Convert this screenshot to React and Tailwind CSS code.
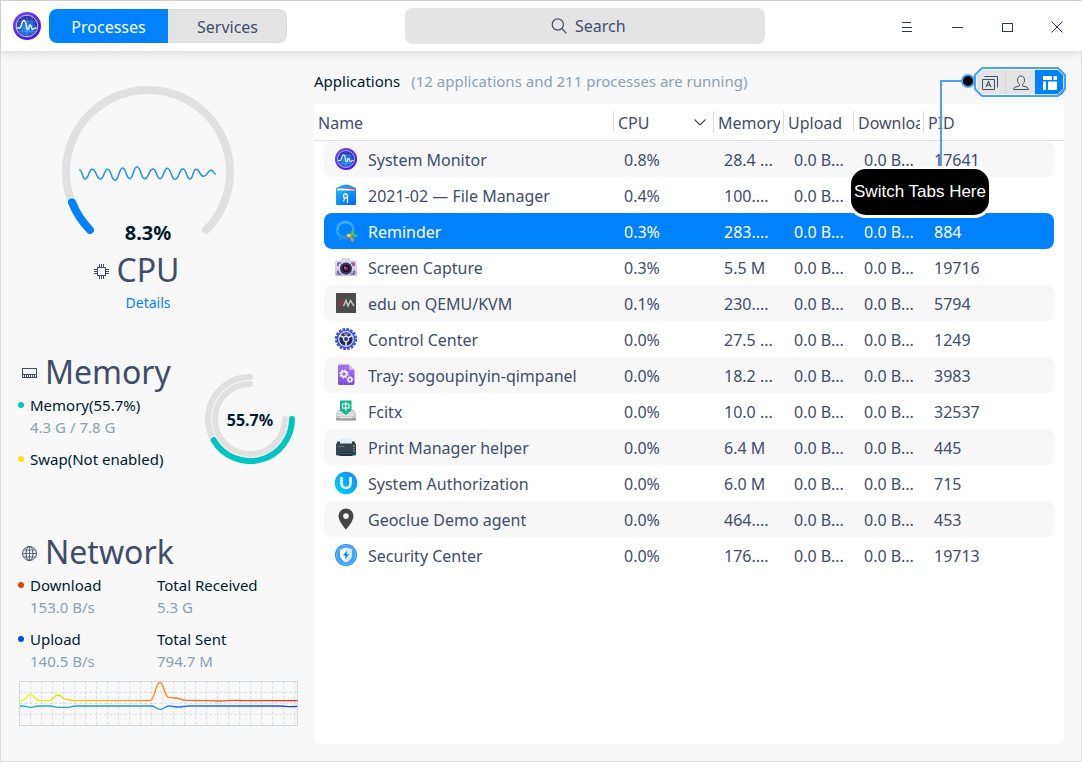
import React from "react";

/* Joins points with horizontal-tangent curves */
function smooth(points) {
  return points
    .map(([x, y], i) => {
      if (i === 0) return `M${x} ${y}`;
      const [px, py] = points[i - 1];
      const mid = (px + x) / 2;
      return `C${mid} ${py} ${mid} ${y} ${x} ${y}`;
    })
    .join(" ");
}

const cpuWave = [
  [119, 300], [135, 327], [157, 298], [181, 327], [203, 298], [225, 331], [248, 294],
  [269, 326], [291, 290], [314, 326], [339, 297], [360, 326], [382, 295], [405, 328],
  [429, 297], [450, 327], [468, 298], [491, 319], [514, 300], [526, 312],
];

const downloadLine = [
  [60, 512], [68, 511], [90, 493], [117, 512], [148, 512], [174, 495], [197, 508], [226, 512],
  [450, 512], [480, 458], [506, 502], [524, 504], [560, 511], [620, 512], [660, 513], [703, 511],
  [740, 512], [892, 512],
];

const uploadLine = [
  [60, 528], [66, 528], [92, 532], [117, 528], [150, 528], [174, 532], [205, 532], [226, 528],
  [455, 528], [481, 538], [506, 528], [535, 531], [565, 528], [845, 528], [870, 530], [892, 529],
];

function MonitorIcon({ className, id }) {
  return (
    <svg viewBox="0 0 28 28" className={className} aria-hidden="true">
      <defs>
        <linearGradient id={`${id}-ring`} x1="0" y1="0" x2="1" y2="1">
          <stop offset="0" stopColor="#7a4df5" />
          <stop offset="1" stopColor="#3f0fd0" />
        </linearGradient>
        <radialGradient id={`${id}-face`} cx="0.5" cy="0.62" r="0.6">
          <stop offset="0" stopColor="#1fa6ff" />
          <stop offset="1" stopColor="#2c1f9e" />
        </radialGradient>
      </defs>
      <circle cx="14" cy="14" r="14" fill={`url(#${id}-ring)`} />
      <circle cx="14" cy="14" r="10.8" fill={`url(#${id}-face)`} stroke="#d3c4ff" strokeWidth="1" />
      <path d="M9 5v18M14 3.5v21M19 5v18M4 9.5h20M4 19.5h20" stroke="#69b9ff" strokeWidth="0.5" opacity="0.7" />
      <path
        d="M4.500 16H6.500C8.500 16 8.500 8.500 11 8.500S13 17.500 14.800 17.500 15.500 13 17 13 18.500 17.500 19.800 17.500 20.500 16 23 16"
        fill="none"
        stroke="#fff"
        strokeWidth="1.300"
        strokeLinecap="round"
      />
    </svg>
  );
}

const iconClass = "size-6 shrink-0";

function AppIcon({ name }) {
  switch (name) {
    case "monitor":
      return (
        <span className="flex size-6 shrink-0 items-center justify-center">
          <MonitorIcon id="row-monitor" className="size-[22px]" />
        </span>
      );
    case "files":
      return (
        <svg viewBox="0 0 24 24" className={iconClass} aria-hidden="true">
          <defs>
            <linearGradient id="files-g" x1="0" y1="0" x2="1" y2="1">
              <stop offset="0" stopColor="#1db4ff" />
              <stop offset="1" stopColor="#0a63f7" />
            </linearGradient>
          </defs>
          <path d="M2 5L9 2q3-1.200 6 0l7 3V9H2z" fill="#1a9df2" />
          <path d="M3 5.500h18v3H3z" fill="#fff" />
          <path d="M9 5l12 0v2z" fill="#f0466e" />
          <path d="M2 7.500h20V21q0 1-1 1H3q-1 0-1-1z" fill="url(#files-g)" />
          <circle cx="11.500" cy="13" r="2" fill="none" stroke="#fff" strokeWidth="1.300" />
          <path d="M10.500 15.500l-1 3M13.500 14.500v5.500" stroke="#fff" strokeWidth="1.100" />
        </svg>
      );
    case "reminder":
      return (
        <svg viewBox="0 0 24 24" className={iconClass} aria-hidden="true">
          <path
            d="M6.500 17.500A8.200 8.200 0 1 1 19.300 12"
            fill="none"
            stroke="#2aa3f0"
            strokeWidth="2.600"
          />
          <path d="M6.500 15.500L3.800 20.500h9.700l1-2.500z" fill="#2a8fe0" />
          <path d="M3.800 11a7.800 7.800 0 0 1 13.500-5" fill="none" stroke="#5cc5f5" strokeWidth="1" />
          <path d="M18.500 10.500q3 2.500 1 6.500h-3q-.5-4 2-6.500z" fill="#5cb848" />
          <path d="M12.500 15.500q3-1.500 4.500.5l-.5 2.500q-3.500.3-4-3z" fill="#f5d23c" />
          <path d="M17.500 17.500l2.500 2.500-1 3-3-2z" fill="#f28a2c" />
          <path d="M19.500 15.500q3-1 4.500 1.500-2 2-4.500 1z" fill="#35b7a9" />
        </svg>
      );
    case "capture":
      return (
        <svg viewBox="0 0 24 24" className={iconClass} aria-hidden="true">
          <path d="M7 5.500L8.500 3h7L17 5.500h4q2 0 2 2V19q0 2-2 2H3q-2 0-2-2V7.500q0-2 2-2z" fill="#d6d1f8" />
          <path d="M1 16h22v3q0 2-2 2H3q-2 0-2-2z" fill="#beb8ec" />
          <path d="M4 11V8h3M17 8h3v3M20 15.500V19h-3M7 19H4v-3.500" fill="none" stroke="#4b465f" strokeWidth="1.200" />
          <circle cx="12" cy="13.500" r="6" fill="#37314a" />
          <circle cx="12" cy="13.500" r="3.600" fill="#160d26" />
          <circle cx="12" cy="13.500" r="2.100" fill="#8c2b6e" />
          <circle cx="11" cy="12.500" r="1" fill="#c76ab0" />
          <circle cx="19" cy="10" r="1" fill="#e8402f" />
        </svg>
      );
    case "vm":
      return (
        <svg viewBox="0 0 24 24" className={iconClass} aria-hidden="true">
          <rect x="2" y="2" width="20" height="20" rx="0.500" fill="#4c4c4c" />
          <path d="M4.500 9l2 5.500L9 9" fill="none" stroke="#8c3847" strokeWidth="1.700" />
          <path d="M9.500 15l2.500-5.500 2 5.500 2.500-5.500 3.500 5.500" fill="none" stroke="#c4c4c4" strokeWidth="1.500" />
        </svg>
      );
    case "control":
      return (
        <svg viewBox="0 0 24 24" className={iconClass} aria-hidden="true">
          <circle cx="12" cy="12" r="10" fill="none" stroke="#3c4fd8" strokeWidth="2.200" strokeDasharray="2.700 1.230" />
          <circle cx="12" cy="12" r="9.300" fill="#3552d9" />
          <circle cx="12" cy="12" r="7.300" fill="#252b52" stroke="#dce4ff" strokeWidth="1.200" />
          <path d="M12 12V19M12 12L6 8.500M12 12l6-3.500" stroke="#dce4ff" strokeWidth="1.600" />
          <path d="M9 6.500h6L12 10z" fill="#8796dd" />
          <circle cx="12" cy="12" r="2.600" fill="#303c87" stroke="#dce4ff" strokeWidth="1.100" />
        </svg>
      );
    case "tray":
      return (
        <svg viewBox="0 0 24 24" className={iconClass} aria-hidden="true">
          <defs>
            <linearGradient id="tray-g" x1="0" y1="0" x2="0" y2="1">
              <stop offset="0" stopColor="#a578f2" />
              <stop offset="1" stopColor="#7c4ee0" />
            </linearGradient>
          </defs>
          <path d="M5.500 1.500H15l5.500 5.500v13.500q0 1.500-1.500 1.500H5.500Q4 22 4 20.500V3q0-1.500 1.500-1.500z" fill="url(#tray-g)" />
          <path d="M15 1.500V5.500Q15 7 16.500 7h4z" fill="#d1b8fb" />
          <circle cx="10" cy="11" r="2.600" fill="none" stroke="#fff" strokeWidth="1.600" />
          <circle cx="10" cy="11" r="4" fill="none" stroke="#fff" strokeWidth="1.200" strokeDasharray="1.600 1.540" />
          <circle cx="16" cy="16.500" r="1.900" fill="none" stroke="#fff" strokeWidth="1.400" />
          <circle cx="16" cy="16.500" r="2.900" fill="none" stroke="#fff" strokeWidth="0.900" strokeDasharray="1.200 1.077" />
        </svg>
      );
    case "fcitx":
      return (
        <svg viewBox="0 0 24 24" className={iconClass} aria-hidden="true">
          <path d="M4 11h16l2 4v5.500q0 1-1 1H3q-1 0-1-1V15z" fill="#c9c9c9" />
          <path d="M2 19h20v1.500q0 1-1 1H3q-1 0-1-1z" fill="#9f9f9f" />
          <path d="M4 13.500h16M3.500 16h17M6 18.500h12" stroke="#f7f7f7" strokeWidth="1.300" strokeDasharray="2 .7" />
          <path d="M6 1.500h11.500V11.500L11.800 16 6 11.500z" fill="#10b98d" />
          <path d="M8.500 5h6.500v4H8.500zM11.750 3v9" fill="none" stroke="#fff" strokeWidth="1.100" />
        </svg>
      );
    case "printer":
      return (
        <svg viewBox="0 0 24 24" className={iconClass} aria-hidden="true">
          <path d="M6 3.500h11.500L19 9H5z" fill="#dbeefc" />
          <path d="M3.500 6.500H6v2.500h12V6.500h2.500l1.500 4H2z" fill="#26323a" />
          <rect x="2" y="8.500" width="20" height="12" rx="1.200" fill="#344651" />
          <path d="M5.500 15h13v6h-13z" fill="#263640" />
          <path d="M6 16h12M6 18.500h12" stroke="#40545f" strokeWidth="1" />
          <path d="M3.500 11.500h7" stroke="#7b8c95" strokeWidth="0.700" />
          <path d="M19 11h1.800" stroke="#f0c43c" strokeWidth="1.100" />
          <path d="M19 13.500h1.800" stroke="#ef5b3a" strokeWidth="1.100" />
          <path d="M19 16h1.800" stroke="#3cb0ef" strokeWidth="1.100" />
        </svg>
      );
    case "authorization":
      return (
        <svg viewBox="0 0 24 24" className={iconClass} aria-hidden="true">
          <defs>
            <linearGradient id="auth-g" x1="0" y1="1" x2="1" y2="0">
              <stop offset="0" stopColor="#00d5f5" />
              <stop offset="0.500" stopColor="#05b0fa" />
              <stop offset="1" stopColor="#1687ff" />
            </linearGradient>
          </defs>
          <circle cx="12" cy="12" r="11.300" fill="url(#auth-g)" />
          <path d="M7.500 6v6.500a4.500 4.500 0 0 0 9 0V6" fill="none" stroke="#fff" strokeWidth="2.500" />
        </svg>
      );
    case "geoclue":
      return (
        <svg viewBox="0 0 24 24" className={iconClass} aria-hidden="true">
          <path
            fillRule="evenodd"
            d="M12 1.500a7.500 7.500 0 0 1 7.500 7.500C19.500 14.500 12 22.500 12 22.500S4.500 14.500 4.500 9A7.500 7.500 0 0 1 12 1.500zm0 4.800a2.800 2.800 0 1 0 0 5.600 2.800 2.800 0 0 0 0-5.600z"
            fill="#454545"
          />
        </svg>
      );
    default:
      return (
        <svg viewBox="0 0 24 24" className={iconClass} aria-hidden="true">
          <circle cx="12" cy="12" r="11" fill="#1f8df5" />
          <circle cx="12" cy="12" r="9.600" fill="#3aa5fa" stroke="#7cc6ff" strokeWidth="0.800" />
          <path d="M12 4.500l6 2v5q0 5-6 8-6-3-6-8v-5z" fill="#f4faff" />
          <path d="M12 4.500l6 2v5q0 5-6 8z" fill="#d5e9fb" />
          <path d="M13 7.500l-4 5h2.500L11 16.500l4-5.300h-2.500z" fill="#1479ee" />
        </svg>
      );
  }
}

const processes = [
  { icon: "monitor", name: "System Monitor", cpu: "0.8%", memory: "28.4 ...", pid: "17641" },
  { icon: "files", name: "2021-02 — File Manager", cpu: "0.4%", memory: "100....", pid: "" },
  { icon: "reminder", name: "Reminder", cpu: "0.3%", memory: "283....", pid: "884", selected: true },
  { icon: "capture", name: "Screen Capture", cpu: "0.3%", memory: "5.5 M", pid: "19716" },
  { icon: "vm", name: "edu on QEMU/KVM", cpu: "0.1%", memory: "230....", pid: "5794" },
  { icon: "control", name: "Control Center", cpu: "0.0%", memory: "27.5 ...", pid: "1249" },
  { icon: "tray", name: "Tray: sogoupinyin-qimpanel", cpu: "0.0%", memory: "18.2 ...", pid: "3983" },
  { icon: "fcitx", name: "Fcitx", cpu: "0.0%", memory: "10.0 ...", pid: "32537" },
  { icon: "printer", name: "Print Manager helper", cpu: "0.0%", memory: "6.4 M", pid: "445" },
  { icon: "authorization", name: "System Authorization", cpu: "0.0%", memory: "6.0 M", pid: "715" },
  { icon: "geoclue", name: "Geoclue Demo agent", cpu: "0.0%", memory: "464....", pid: "453" },
  { icon: "security", name: "Security Center", cpu: "0.0%", memory: "176....", pid: "19713" },
];

function TitleBar() {
  const control = "flex h-[50px] w-[50px] items-center justify-center pt-[2px]";
  return (
    <header className="relative z-10 -mr-px flex h-[50px] shrink-0 items-center bg-white pl-3 shadow-[0_1px_10px_rgba(0,0,0,0.16)]">
      <MonitorIcon id="title-monitor" className="size-7" />
      <nav className="ml-2 flex h-[34px] overflow-hidden rounded-lg text-base">
        <button type="button" className="w-[119px] bg-[#0081ff] pt-[2px] text-white">Processes</button>
        <button type="button" className="w-[119px] rounded-r-lg border border-[#dadada] border-l-[#e4e4e4] bg-[#e4e4e4] pt-[2px]">Services</button>
      </nav>
      <div className="flex flex-1 justify-center pl-px">
        <label className="flex h-9 w-[360px] items-center justify-center gap-2 rounded-lg bg-[#e4e4e4] pl-2">
          <svg viewBox="0 0 16 16" className="size-4" fill="none" stroke="#414d68" strokeWidth="1.200" aria-hidden="true">
            <circle cx="6.800" cy="6.500" r="5.600" />
            <path d="M10.900 10.500L15.300 15.300" />
          </svg>
          <input
            type="text"
            aria-label="Search"
            placeholder="Search"
            className="w-[52px] bg-transparent text-base outline-none placeholder:text-[#414d68]"
          />
        </label>
      </div>
      <button type="button" aria-label="Menu" className={control}>
        <svg viewBox="0 0 12 12" className="size-3" stroke="#2b3654" shapeRendering="crispEdges" aria-hidden="true">
          <path d="M1 1.500h9M1 6.500h10M1 10.500h10" />
        </svg>
      </button>
      <button type="button" aria-label="Minimize" className={control}>
        <svg viewBox="0 0 12 12" className="size-3" stroke="#2b3654" shapeRendering="crispEdges" aria-hidden="true">
          <path d="M1 6.500h11" />
        </svg>
      </button>
      <button type="button" aria-label="Maximize" className={control}>
        <svg viewBox="0 0 12 12" className="size-3" fill="none" stroke="#2b3654" shapeRendering="crispEdges" aria-hidden="true">
          <path d="M1.500 2.500h10v8h-10z" />
        </svg>
      </button>
      <button type="button" aria-label="Close" className={control}>
        <svg viewBox="0 0 12 12" className="size-3" stroke="#2b3654" aria-hidden="true">
          <path d="M0.500 0.500l11 11M11.500 0.500l-11 11" />
        </svg>
      </button>
    </header>
  );
}

function CpuSection() {
  return (
    <section className="flex flex-col items-center pr-5">
      <div className="grid h-[159px] w-[172px]">
        <svg viewBox="66 48 516 450" className="col-start-1 row-start-1 h-[150px] w-[172px]" fill="none" strokeLinecap="round" aria-hidden="true">
          <path d="M150 480A246 246 0 1 1 498 480" stroke="#e0e0e0" strokeWidth="24" />
          <path d="M150 480A246 246 0 0 1 96 397" stroke="#f8f8f8" strokeWidth="30" />
          <path d="M150 480A246 246 0 0 1 96 397" stroke="#0081ff" strokeWidth="24" />
          <path d={smooth(cpuWave)} stroke="#1f8dfa" strokeWidth="4.500" />
        </svg>
        <strong className="col-start-1 row-start-1 self-end justify-self-center text-xl leading-6 text-[#001a2e]">8.3%</strong>
      </div>
      <h2 className="mt-[5px] grid w-full grid-cols-[1fr_auto_1fr] items-center text-[32px] leading-10">
        <svg viewBox="0 0 15 15" className="mr-2 mt-[3px] size-[15px] justify-self-end" fill="none" stroke="#414d68" shapeRendering="crispEdges" aria-hidden="true">
          <path d="M3.500 3.500h8v8h-8zM5.500 0v3M7.500 0v3M9.500 0v3M5.500 12v3M7.500 12v3M9.500 12v3M0 5.500h3M0 7.500h3M0 9.500h3M12 5.500h3M12 7.500h3M12 9.500h3" />
        </svg>
        <span>CPU</span>
      </h2>
      <a href="#details" className="mt-[3px] text-sm leading-5 text-[#0081ff]">Details</a>
    </section>
  );
}

function Dot({ className }) {
  return <span className={`size-[6px] shrink-0 rounded-full ${className}`} />;
}

function MemorySection() {
  return (
    <section className="mt-[39px] flex items-start justify-between pr-[3px]">
      <div>
        <h2 className="flex items-center gap-2 pl-1 text-[32px] leading-10">
          <svg viewBox="0 0 15 12" className="mt-[2px] h-3 w-[15px]" fill="none" stroke="#414d68" shapeRendering="crispEdges" aria-hidden="true">
            <path d="M0.500 8V1.500h14V8M0 7.500h15M0.500 8v3M2.500 8v3M4.500 8v3M6.500 8v3M8.500 8v3M10.500 8v3M12.500 8v3M14.500 8v3M0 10.500h15" />
          </svg>
          <span>Memory</span>
        </h2>
        <div className="mt-[2px] text-[15px] leading-[22px]">
          <p className="flex items-center gap-[6px] whitespace-nowrap text-[#001a2e]"><Dot className="bg-[#00c5c0]" />Memory(55.7%)</p>
          <p className="pl-3 text-[#8aa1b4]">4.3 G / 7.8 G</p>
          <p className="mt-[10px] flex items-center gap-[6px] whitespace-nowrap text-[#001a2e]"><Dot className="bg-[#ffdf1b]" />Swap(Not enabled)</p>
        </div>
      </div>
      <div className="mt-[22px] grid size-[90px] place-items-center">
        <svg viewBox="0 0 90 90" className="col-start-1 row-start-1 size-[90px]" fill="none" strokeWidth="6" strokeLinecap="round" aria-hidden="true">
          <path d="M45 3A42 42 0 1 0 87 45" stroke="#e0e0e0" />
          <path d="M45 10A35 35 0 1 0 80 45" stroke="#e0e0e0" />
          <path d="M87 45A42 42 0 0 1 8.600 66" stroke="#f8f8f8" strokeWidth="8" />
          <path d="M87 45A42 42 0 0 1 8.600 66" stroke="#00c5c0" />
        </svg>
        <strong className="col-start-1 row-start-1 pt-[2px] text-base leading-6 text-[#001a2e]">55.7%</strong>
      </div>
    </section>
  );
}

const gridX = Array.from({ length: 25 }, (_, k) => 92 + 33 * k);
const gridY = [487, 520, 553];

function NetworkSection() {
  return (
    <section className="mt-[62px]">
      <h2 className="flex items-center gap-2 pl-1 text-[32px] leading-10">
        <svg viewBox="0 0 15 15" className="mt-[3px] size-[15px]" fill="none" stroke="#414d68" aria-hidden="true">
          <circle cx="7.500" cy="7.500" r="7" />
          <ellipse cx="7.500" cy="7.500" rx="3.500" ry="7" />
          <path d="M7.500 0.500v14M0.500 7.500h14M1.800 4h11.400M1.800 11h11.400" strokeWidth="0.800" />
        </svg>
        <span>Network</span>
      </h2>
      <dl className="mt-[2px] grid grid-cols-[139px_1fr] gap-y-[10px] text-[15px] leading-[22px] text-[#001a2e]">
        <div>
          <dt className="flex items-center gap-[6px]"><Dot className="bg-[#e14300]" />Download</dt>
          <dd className="pl-3 text-[#8aa1b4]">153.0 B/s</dd>
        </div>
        <div>
          <dt>Total Received</dt>
          <dd className="text-[#8aa1b4]">5.3 G</dd>
        </div>
        <div>
          <dt className="flex items-center gap-[6px]"><Dot className="bg-[#004ef0]" />Upload</dt>
          <dd className="pl-3 text-[#8aa1b4]">140.5 B/s</dd>
        </div>
        <div>
          <dt>Total Sent</dt>
          <dd className="text-[#8aa1b4]">794.7 M</dd>
        </div>
      </dl>
      <svg viewBox="57 453 837 135" className="ml-px mt-[9px] block h-[45px] w-[279px]" fill="none" aria-hidden="true">
        <defs>
          <linearGradient id="down-g" gradientUnits="userSpaceOnUse" x1="60" y1="0" x2="892" y2="0">
            <stop offset="0" stopColor="#e6ff00" />
            <stop offset="0.500" stopColor="#f08a1c" />
            <stop offset="0.750" stopColor="#f0512a" />
            <stop offset="1" stopColor="#ff1c1c" />
          </linearGradient>
          <linearGradient id="up-g" gradientUnits="userSpaceOnUse" x1="60" y1="0" x2="892" y2="0">
            <stop offset="0" stopColor="#14b0d8" />
            <stop offset="0.500" stopColor="#2a86ec" />
            <stop offset="1" stopColor="#1742ff" />
          </linearGradient>
        </defs>
        {gridX.map((x) => (
          <path key={x} d={`M${x} 454V587`} stroke="#d4dbe0" strokeWidth="3" strokeDasharray="9 6" />
        ))}
        {gridY.map((y) => (
          <path key={y} d={`M58 ${y}H893`} stroke="#d4dbe0" strokeWidth="3" strokeDasharray="9 6" />
        ))}
        <rect x="58.500" y="454.500" width="834" height="132" stroke="#d0d7dd" strokeWidth="3" />
        <path d={smooth(downloadLine)} stroke="url(#down-g)" strokeWidth="4" />
        <path d={smooth(uploadLine)} stroke="url(#up-g)" strokeWidth="4" />
      </svg>
    </section>
  );
}

function ViewSwitch() {
  const item = "flex w-[30px] items-center justify-center";
  return (
    <div className="relative -mr-px">
      <div className="flex h-[26px] overflow-hidden rounded-lg bg-[#e4e4e4]">
        <button type="button" aria-label="Applications" className={item}>
          <svg viewBox="0 0 16 14" className="h-[14px] w-4" fill="none" stroke="#414d68" aria-hidden="true">
            <path d="M0.500 3.500h12v10h-12zM2.500 0.500h13v11" />
            <path d="M4 11l2.500-5.500L9 11M5 9.300h3" strokeWidth="1.100" />
          </svg>
        </button>
        <button type="button" aria-label="My processes" className={`${item} border-l border-[#d6d6d6]`}>
          <svg viewBox="0 0 16 16" className="size-4" fill="none" stroke="#414d68" aria-hidden="true">
            <path d="M8 1C5.500 1 4.500 2.800 4.500 5c0 2 .8 3.300 2 4.500v1.300L1.800 12.300Q0.800 12.800 0.600 14.500h14.800Q15.200 12.800 14.200 12.300L9.500 10.800V9.500c1.200-1.200 2-2.500 2-4.500C11.500 2.800 10.500 1 8 1z" />
          </svg>
        </button>
        <button type="button" aria-label="All processes" className={`${item} bg-[#0081ff]`}>
          <svg viewBox="0 0 14 14" className="size-[14px]" fill="#fff" aria-hidden="true">
            <path d="M0 0h9v4H0zM10.500 0H14v4h-3.500zM0 5.500h3V14H0zM5 5.500h9V14H5z" />
          </svg>
        </button>
      </div>
      {/* Callout pointing at the switch */}
      <svg viewBox="0 0 130 102" className="pointer-events-none absolute -right-[2px] -top-[3px] h-[102px] w-[130px] max-w-none" fill="none" aria-hidden="true">
        <path d="M45.500 2.500H120.500L126.500 8.500V21.500L120.500 27.500H45.500L39.500 21.500V8.500z" stroke="#fff" strokeOpacity="0.800" />
        <path d="M45 1H121L128 8V22L121 29H45L38 22V8z" stroke="#4aa1f5" strokeWidth="2" />
        <path d="M30 14H4V100" stroke="#4aa1f5" strokeWidth="2" />
        <circle cx="31" cy="14" r="6" fill="#000" stroke="#4aa1f5" strokeWidth="2" />
      </svg>
      <div className="absolute right-[73px] top-[96px] z-20 flex h-[52px] w-[144px] items-center justify-center whitespace-nowrap rounded-[18px] border-[3px] border-white bg-black font-['Liberation_Sans',sans-serif] text-[17px] text-white">
        Switch Tabs Here
      </div>
    </div>
  );
}

function HeadCell({ children, divider = true, ...rest }) {
  return (
    <th scope="col" className="h-[37px] border-b border-[#e0e0e0] p-0 text-left font-normal" {...rest}>
      <div className={`flex h-[22px] items-center pl-1 pr-[3px] pt-[2px] ${divider ? "border-l border-[#dcdcdc]" : ""}`}>
        {children}
      </div>
    </th>
  );
}

function ProcessTable() {
  return (
    <table className="w-full table-fixed border-separate border-spacing-0 whitespace-nowrap text-base leading-[22px]">
      <colgroup>
        <col className="w-[10px]" />
        <col />
        <col className="w-[100px]" />
        <col className="w-[70px]" />
        <col className="w-[70px]" />
        <col className="w-[70px]" />
        <col className="w-[131px]" />
        <col className="w-[10px]" />
      </colgroup>
      <thead>
        <tr>
          <HeadCell colSpan={2} divider={false}>Name</HeadCell>
          <HeadCell>
            <span className="flex-1">CPU</span>
            <svg viewBox="0 0 12 8" className="mr-1 h-2 w-3" fill="none" stroke="#414d68" strokeWidth="1.200" aria-hidden="true">
              <path d="M0.500 0.500L6 6L11.500 0.500" />
            </svg>
          </HeadCell>
          <HeadCell><span className="overflow-hidden">Memory</span></HeadCell>
          <HeadCell><span className="overflow-hidden">Upload</span></HeadCell>
          <HeadCell><span className="overflow-hidden">Download</span></HeadCell>
          <HeadCell colSpan={2}>PID</HeadCell>
        </tr>
      </thead>
      <tbody>
        {processes.map((p, i) => {
          const tone = p.selected ? "bg-[#0081ff] text-white" : i % 2 === 0 ? "bg-[#f7f7f7]" : "bg-white";
          const cell = `h-9 p-0 pl-[11px] pt-[2px] ${tone}`;
          return (
            <tr key={p.name}>
              <td className="p-0" />
              <td className={`h-9 rounded-l-lg p-0 pl-[10px] ${tone}`}>
                <div className="flex items-center gap-[10px]">
                  <AppIcon name={p.icon} />
                  <span className="pt-[2px]">{p.name}</span>
                </div>
              </td>
              <td className={cell}>{p.cpu}</td>
              <td className={cell}>{p.memory}</td>
              <td className={cell}>0.0 B...</td>
              <td className={cell}>{p.pid ? "0.0 B..." : ""}</td>
              <td className={`${cell} rounded-r-lg`}>{p.pid}</td>
              <td className="p-0" />
            </tr>
          );
        })}
      </tbody>
    </table>
  );
}

export default function App() {
  return (
    <div className="flex min-h-screen flex-col border border-[#dcdcdc] bg-[#f8f8f8] font-['Noto_Sans',sans-serif] text-[#414d68]">
      <TitleBar />
      <div className="flex flex-1">
        <aside className="w-[313px] shrink-0 pl-[17px] pr-4 pt-[35px]">
          <CpuSection />
          <MemorySection />
          <NetworkSection />
        </aside>
        <main className="flex min-w-0 flex-1 flex-col pb-[17px] pr-[17px] pt-[19px]">
          <div className="flex h-[34px] items-start justify-between">
            <p className="text-[15px] leading-[22px] text-[#001a2e]">
              Applications
              <span className="ml-[11px] text-[#8aa1b4]">(12 applications and 211 processes are running)</span>
            </p>
            <ViewSwitch />
          </div>
          <div className="flex-1 rounded-b-lg bg-white">
            <ProcessTable />
          </div>
        </main>
      </div>
    </div>
  );
}
